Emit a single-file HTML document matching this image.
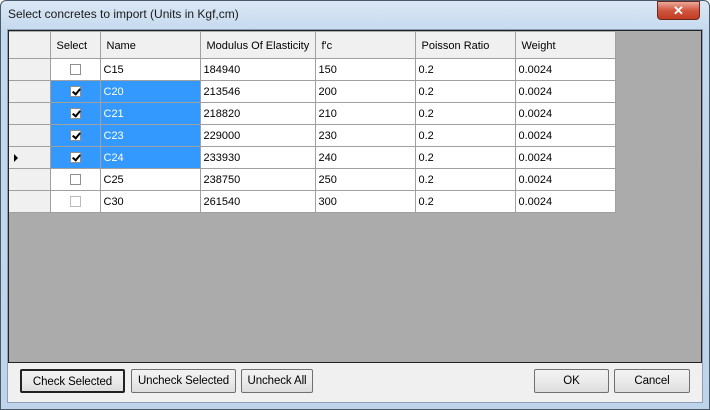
<!DOCTYPE html>
<html><head><style>
*{margin:0;padding:0;box-sizing:border-box}
body{width:710px;height:410px;overflow:hidden;font-family:"Liberation Sans",sans-serif;font-size:11px;background:#fff}
.win{position:absolute;left:0;top:0;width:710px;height:410px;background:linear-gradient(#dbe8f5,#c5d9ee 30px,#bfd4ea);border:1px solid #4a5a6a;border-radius:6px 6px 0 0}
.title{position:absolute;left:8px;top:7px;font-size:12px;color:#1a1a1a}
.close{position:absolute;left:657px;top:1px;width:43px;height:19px;border:1px solid #6b2a20;border-radius:0 0 4px 4px;background:linear-gradient(#e9a99a,#d0553e 50%,#c13b22);color:#fff;text-align:center;font-weight:bold;font-size:13px;line-height:17px}
.client{position:absolute;left:7px;top:29px;width:696px;height:374px;background:#f0f0f0;border:1px solid #8aa0b8}
.grid{position:absolute;left:8px;top:30px;width:694px;height:333px;background:#ababab;border:1px solid #222}
table{position:absolute;left:0px;top:1px;border-collapse:collapse}
td{height:22px;border-right:1px solid #a0a0a0;border-bottom:1px solid #a0a0a0;padding-left:3px;padding-top:1px;white-space:nowrap;background:#fff;color:#000}
tr.h td{background:#f0f0f0;height:26px;padding-left:6px;padding-top:3px}
td.rh{background:#f0f0f0;width:40px;position:relative}
td.s{background:#3399ff;color:#fff}
td.cb{text-align:center;padding:0}
.box{display:inline-block;width:11px;height:11px;border:1px solid #8e8f8f;background:#fff;vertical-align:middle;position:relative}
.box.on:after{content:"";position:absolute;left:3px;top:0px;width:3px;height:6px;border:solid #000;border-width:0 2px 2px 0;transform:rotate(40deg)}
.box.dis{border-color:#bcbcbc}
.arr{position:absolute;left:5px;top:7px;width:0;height:0;border-left:4px solid #000;border-top:4px solid transparent;border-bottom:4px solid transparent}
.btn{position:absolute;top:369px;height:24px;border:1px solid #707070;border-radius:2px;background:linear-gradient(#f2f2f2,#ebebeb 50%,#dddddd);text-align:center;line-height:22px;font-size:11.5px;color:#000;letter-spacing:-0.1px}
</style></head><body>
<div class="win"></div>
<div class="title">Select concretes to import (Units in Kgf,cm)</div>
<div class="close">✕</div>
<div class="client"></div>
<div class="grid">
<table>
<tr class="h"><td style="width:41px"></td><td style="width:50px">Select</td><td style="width:100px">Name</td><td style="width:115px">Modulus Of Elasticity</td><td style="width:100px">f'c</td><td style="width:100px">Poisson Ratio</td><td style="width:100px">Weight</td></tr>
<tr><td class="rh"></td><td class="cb"><span class="box"></span></td><td>C15</td><td>184940</td><td>150</td><td>0.2</td><td>0.0024</td></tr>
<tr><td class="rh"></td><td class="cb s"><span class="box on"></span></td><td class="s">C20</td><td>213546</td><td>200</td><td>0.2</td><td>0.0024</td></tr>
<tr><td class="rh"></td><td class="cb s"><span class="box on"></span></td><td class="s">C21</td><td>218820</td><td>210</td><td>0.2</td><td>0.0024</td></tr>
<tr><td class="rh"></td><td class="cb s"><span class="box on"></span></td><td class="s">C23</td><td>229000</td><td>230</td><td>0.2</td><td>0.0024</td></tr>
<tr><td class="rh"><span class="arr"></span></td><td class="cb s"><span class="box on"></span></td><td class="s">C24</td><td>233930</td><td>240</td><td>0.2</td><td>0.0024</td></tr>
<tr><td class="rh"></td><td class="cb"><span class="box"></span></td><td>C25</td><td>238750</td><td>250</td><td>0.2</td><td>0.0024</td></tr>
<tr><td class="rh"></td><td class="cb"><span class="box dis"></span></td><td>C30</td><td>261540</td><td>300</td><td>0.2</td><td>0.0024</td></tr>
</table>
</div>
<div class="btn" style="left:20px;width:105px;border:2px solid #222">Check Selected</div>
<div class="btn" style="left:131px;width:105px">Uncheck Selected</div>
<div class="btn" style="left:241px;width:72px">Uncheck All</div>
<div class="btn" style="left:534px;width:75px">OK</div>
<div class="btn" style="left:614px;width:76px">Cancel</div>
</body></html>
